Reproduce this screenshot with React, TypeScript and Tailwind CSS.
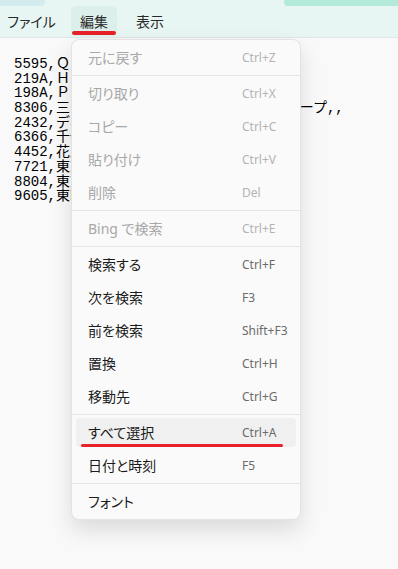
import React from "react";

const mono = { fontFamily: '"Liberation Mono", "Noto Sans CJK JP", monospace' };
const ui = { fontFamily: '"Noto Sans", "Noto Sans CJK JP", sans-serif' };

const lines = [
  "5595,ＱＰＳホールディングス,,",
  "219A,Ｈｅａｒｔｓｅｅｄ,,",
  "198A,ＰｏｓｔＰｒｉｍｅ,,",
  null,
  "2432,ディー・エヌ・エー,,",
  "6366,千代田化工建設,,",
  "4452,花王,,",
  "7721,東京計器,,",
  "8804,東京建物,,",
  "9605,東映,,",
];

type Item = { label: string; key: string; disabled?: boolean; hover?: boolean } | "sep";

const items: Item[] = [
  { label: "元に戻す", key: "Ctrl+Z", disabled: true },
  "sep",
  { label: "切り取り", key: "Ctrl+X", disabled: true },
  { label: "コピー", key: "Ctrl+C", disabled: true },
  { label: "貼り付け", key: "Ctrl+V", disabled: true },
  { label: "削除", key: "Del", disabled: true },
  "sep",
  { label: "Bing で検索", key: "Ctrl+E", disabled: true },
  "sep",
  { label: "検索する", key: "Ctrl+F" },
  { label: "次を検索", key: "F3" },
  { label: "前を検索", key: "Shift+F3" },
  { label: "置換", key: "Ctrl+H" },
  { label: "移動先", key: "Ctrl+G" },
  "sep",
  { label: "すべて選択", key: "Ctrl+A", hover: true },
  { label: "日付と時刻", key: "F5" },
  "sep",
  { label: "フォント", key: "" },
];

function EditMenu() {
  return (
    <div
      className="absolute left-[71px] top-[39px] w-[230px] rounded-[8px] border border-[#e3e3e3] bg-[#fafafa] py-[1px] shadow-[0_10px_22px_rgba(0,0,0,0.12)]"
      style={ui}
    >
      {items.map((it, i) =>
        it === "sep" ? (
          <div key={i} className="my-[1px] h-px bg-[#e5e5e5]" />
        ) : (
          <div key={i} className="relative h-[33px] px-[4px] py-[2px]">
            <div
              className={
                "flex h-full items-center rounded-[4px] pl-[12px] " +
                (it.hover ? "bg-[#f0f0f0]" : "")
              }
            >
              <span
                className={
                  "w-[154px] text-[14px] [font-feature-settings:'palt'] " +
                  (it.disabled ? "text-[#a8a8a8]" : "text-[#1b1b1b]")
                }
              >
                {it.label}
              </span>
              <span
                className={
                  "text-[12px] " + (it.disabled ? "text-[#b3b3b3]" : "text-[#6b6b6b]")
                }
              >
                {it.key}
              </span>
            </div>
            {it.hover && (
              <div className="absolute left-[9px] top-[28px] h-[3px] w-[202px] rounded-full bg-[#e8202a]" />
            )}
          </div>
        )
      )}
    </div>
  );
}

export default function App() {
  return (
    <div className="relative h-[569px] w-[398px] overflow-hidden bg-[#f9f9f9]">
      <header className="h-[38px] border-b border-[#dfe7e5] bg-[#e8f6f3]">
        <div className="flex h-[6px]">
          <div className="w-[45px] rounded-br-[4px] bg-[#d3eaee]" />
          <div className="flex-1" />
          <div className="w-[114px] rounded-bl-[4px] bg-[#b4ead9]" />
        </div>
        <nav
          className="ml-[3px] flex gap-[11px] text-[14px] text-[#2a2a2a] [font-feature-settings:'palt']"
          style={ui}
        >
          <div className="flex h-[30px] w-[57px] items-center justify-center">ファイル</div>
          <div className="relative flex h-[30px] w-[46px] items-center justify-center rounded-[5px] bg-[#dcefeb]">
            編集
            <div className="absolute bottom-[1px] left-[1px] h-[4px] w-[44px] rounded-full bg-[#e8202a]" />
          </div>
          <div className="flex h-[30px] w-[44px] items-center justify-center">表示</div>
        </nav>
      </header>

      <main className="pl-[14px] pt-[19px] text-[14px] text-black" style={mono}>
        {lines.map((l, i) =>
          l === null ? (
            <div key={i} className="h-[14.7px] whitespace-nowrap leading-[14.7px]">
              8306,<span className="tracking-[2.27px]">三菱ＵＦＪフィナンシャル・グル</span>ープ,,
            </div>
          ) : (
            <div key={i} className="h-[14.7px] whitespace-nowrap leading-[14.7px]">
              {l}
            </div>
          )
        )}
      </main>

      <EditMenu />
    </div>
  );
}
